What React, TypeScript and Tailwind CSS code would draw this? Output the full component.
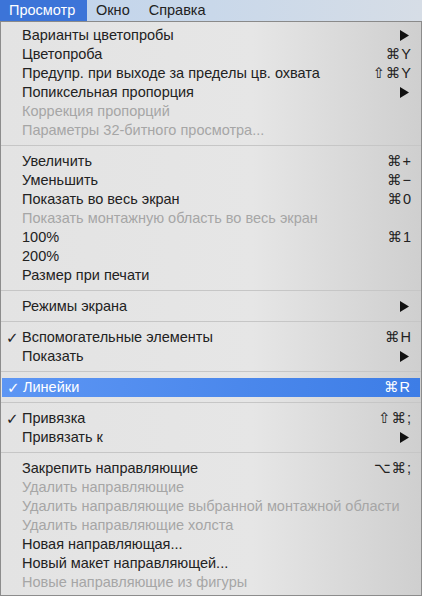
import React from "react";

type Item =
  | { sep: true }
  | {
      sep?: false;
      label: string;
      shortcut?: string;
      sub?: boolean;
      disabled?: boolean;
      checked?: boolean;
      active?: boolean;
    };

const items: Item[] = [
  { label: "Варианты цветопробы", sub: true },
  { label: "Цветопроба", shortcut: "⌘Y" },
  { label: "Предупр. при выходе за пределы цв. охвата", shortcut: "⇧⌘Y" },
  { label: "Попиксельная пропорция", sub: true },
  { label: "Коррекция пропорций", disabled: true },
  { label: "Параметры 32-битного просмотра...", disabled: true },
  { sep: true },
  { label: "Увеличить", shortcut: "⌘+" },
  { label: "Уменьшить", shortcut: "⌘−" },
  { label: "Показать во весь экран", shortcut: "⌘0" },
  { label: "Показать монтажную область во весь экран", disabled: true },
  { label: "100%", shortcut: "⌘1" },
  { label: "200%" },
  { label: "Размер при печати" },
  { sep: true },
  { label: "Режимы экрана", sub: true },
  { sep: true },
  { label: "Вспомогательные элементы", shortcut: "⌘H", checked: true },
  { label: "Показать", sub: true },
  { sep: true },
  { label: "Линейки", shortcut: "⌘R", checked: true, active: true },
  { sep: true },
  { label: "Привязка", shortcut: "⇧⌘;", checked: true },
  { label: "Привязать к", sub: true },
  { sep: true },
  { label: "Закрепить направляющие", shortcut: "⌥⌘;" },
  { label: "Удалить направляющие", disabled: true },
  { label: "Удалить направляющие выбранной монтажной области", disabled: true },
  { label: "Удалить направляющие холста", disabled: true },
  { label: "Новая направляющая..." },
  { label: "Новый макет направляющей..." },
  { label: "Новые направляющие из фигуры", disabled: true },
];

function Arrow({ white }: { white?: boolean }) {
  return (
    <svg width="9" height="11" viewBox="0 0 9 11" className="mr-[3px]">
      <polygon points="0,0 9,5.5 0,11" fill={white ? "#fff" : "#111"} />
    </svg>
  );
}

export default function App() {
  return (
    <div
      className="w-[422px] h-[596px] overflow-hidden text-[14.5px] leading-[19px] text-[#222]"
      style={{ fontFamily: '"Liberation Sans", "DejaVu Sans", sans-serif' }}
    >
      <div className="flex h-[22px] items-center border-b border-[#8a8a8a] bg-gradient-to-r from-[#bfd3ec] via-[#c9d8ea] to-[#d6dde6]">
        <div className="flex h-full w-[87px] items-center bg-[#3c74d8] pl-[9px] text-white">
          Просмотр
        </div>
        <div className="ml-[9px]">Окно</div>
        <div className="ml-[19px]">Справка</div>
      </div>
      <div className="h-[574px] border-x border-b border-[#8c8c8c] bg-gradient-to-r from-[#e3e3e3] via-[#e6e6e6] via-60% to-[#cfcfcf] pt-[4px]">
        {items.map((it, i) =>
          it.sep ? (
            <div key={i} className="pt-[5px] pb-[6px]">
              <div className="h-px bg-[#c6c6c6]" />
            </div>
          ) : (
            <div
              key={i}
              className={
                "flex h-[19px] items-center pr-[9px] " +
                (it.active
                  ? "mx-px bg-gradient-to-r from-[#5d96f4] to-[#3d7de6] text-white"
                  : it.disabled
                    ? "text-[#a6a6a6]"
                    : "")
              }
            >
              <div className="w-[21px] pl-[5px] text-[15px] font-bold">{it.checked ? "✓" : ""}</div>
              <div className="flex-1 whitespace-nowrap">{it.label}</div>
              {it.shortcut && <div className="tracking-[1px]">{it.shortcut}</div>}
              {it.sub && <Arrow white={it.active} />}
            </div>
          )
        )}
      </div>
    </div>
  );
}
